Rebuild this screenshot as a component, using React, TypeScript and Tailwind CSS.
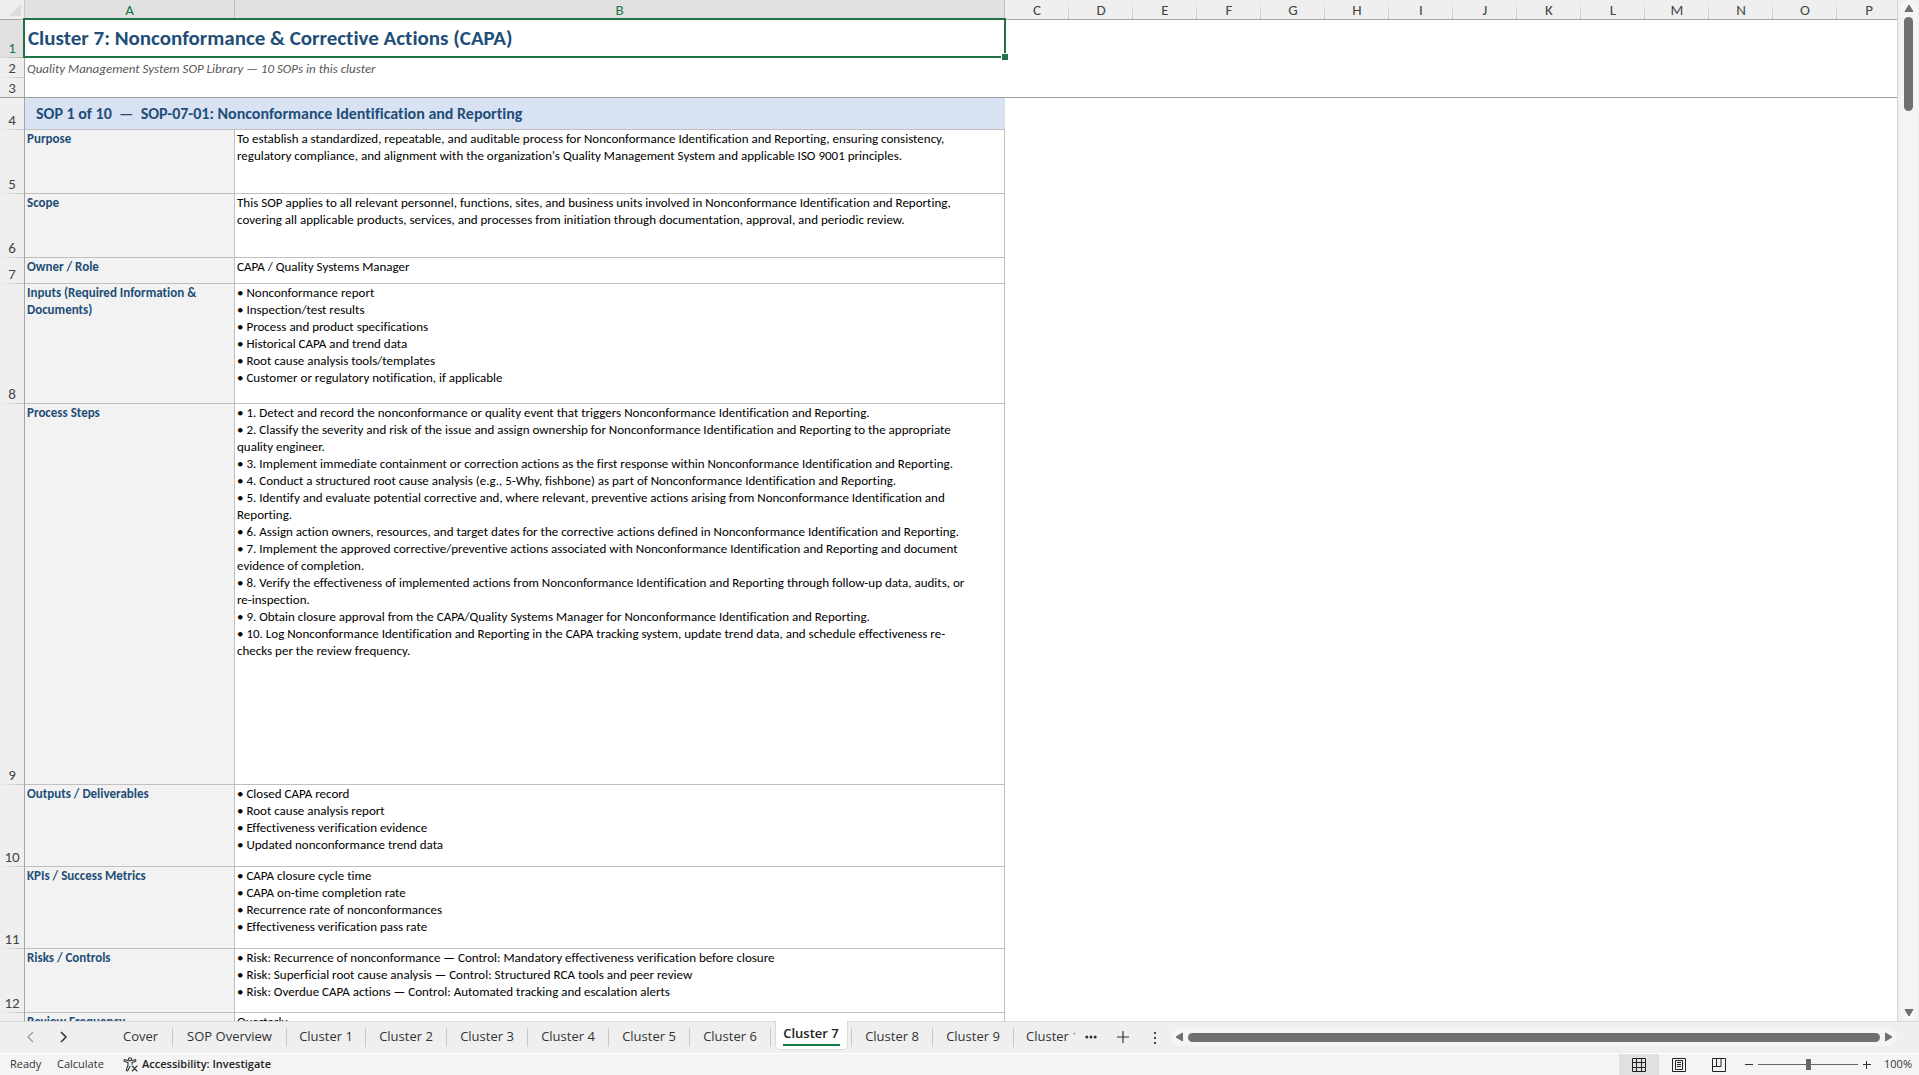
import { useState, type ReactNode } from "react";

const EXTRA_COLUMNS = ["C", "D", "E", "F", "G", "H", "I", "J", "K", "L", "M", "N", "O", "P"];

type Row = { n: number; height: string; label: string[]; lines: string[] };

const ROWS: Row[] = [
  {
    n: 5,
    height: "h-16",
    label: ["Purpose"],
    lines: [
      "To establish a standardized, repeatable, and auditable process for Nonconformance Identification and Reporting, ensuring consistency,",
      "regulatory compliance, and alignment with the organization's Quality Management System and applicable ISO 9001 principles.",
    ],
  },
  {
    n: 6,
    height: "h-16",
    label: ["Scope"],
    lines: [
      "This SOP applies to all relevant personnel, functions, sites, and business units involved in Nonconformance Identification and Reporting,",
      "covering all applicable products, services, and processes from initiation through documentation, approval, and periodic review.",
    ],
  },
  { n: 7, height: "h-[26px]", label: ["Owner / Role"], lines: ["CAPA / Quality Systems Manager"] },
  {
    n: 8,
    height: "h-[120px]",
    label: ["Inputs (Required Information &", "Documents)"],
    lines: [
      "• Nonconformance report",
      "• Inspection/test results",
      "• Process and product specifications",
      "• Historical CAPA and trend data",
      "• Root cause analysis tools/templates",
      "• Customer or regulatory notification, if applicable",
    ],
  },
  {
    n: 9,
    height: "h-[381px]",
    label: ["Process Steps"],
    lines: [
      "• 1. Detect and record the nonconformance or quality event that triggers Nonconformance Identification and Reporting.",
      "• 2. Classify the severity and risk of the issue and assign ownership for Nonconformance Identification and Reporting to the appropriate",
      "quality engineer.",
      "• 3. Implement immediate containment or correction actions as the first response within Nonconformance Identification and Reporting.",
      "• 4. Conduct a structured root cause analysis (e.g., 5-Why, fishbone) as part of Nonconformance Identification and Reporting.",
      "• 5. Identify and evaluate potential corrective and, where relevant, preventive actions arising from Nonconformance Identification and",
      "Reporting.",
      "• 6. Assign action owners, resources, and target dates for the corrective actions defined in Nonconformance Identification and Reporting.",
      "• 7. Implement the approved corrective/preventive actions associated with Nonconformance Identification and Reporting and document",
      "evidence of completion.",
      "• 8. Verify the effectiveness of implemented actions from Nonconformance Identification and Reporting through follow-up data, audits, or",
      "re-inspection.",
      "• 9. Obtain closure approval from the CAPA/Quality Systems Manager for Nonconformance Identification and Reporting.",
      "• 10. Log Nonconformance Identification and Reporting in the CAPA tracking system, update trend data, and schedule effectiveness re-",
      "checks per the review frequency.",
    ],
  },
  {
    n: 10,
    height: "h-[82px]",
    label: ["Outputs / Deliverables"],
    lines: [
      "• Closed CAPA record",
      "• Root cause analysis report",
      "• Effectiveness verification evidence",
      "• Updated nonconformance trend data",
    ],
  },
  {
    n: 11,
    height: "h-[82px]",
    label: ["KPIs / Success Metrics"],
    lines: [
      "• CAPA closure cycle time",
      "• CAPA on-time completion rate",
      "• Recurrence rate of nonconformances",
      "• Effectiveness verification pass rate",
    ],
  },
  {
    n: 12,
    height: "h-16",
    label: ["Risks / Controls"],
    lines: [
      "• Risk: Recurrence of nonconformance — Control: Mandatory effectiveness verification before closure",
      "• Risk: Superficial root cause analysis — Control: Structured RCA tools and peer review",
      "• Risk: Overdue CAPA actions — Control: Automated tracking and escalation alerts",
    ],
  },
  { n: 13, height: "h-[26px]", label: ["Review Frequency"], lines: ["Quarterly"] },
];

const TABS = [
  { name: "Cover", width: "w-16" },
  { name: "SOP Overview", width: "w-[114px]" },
  { name: "Cluster 1", width: "w-[79px]" },
  { name: "Cluster 2", width: "w-[81px]" },
  { name: "Cluster 3", width: "w-[81px]" },
  { name: "Cluster 4", width: "w-[81px]" },
  { name: "Cluster 5", width: "w-[81px]" },
  { name: "Cluster 6", width: "w-[81px]" },
  { name: "Cluster 7", width: "w-[81px]" },
  { name: "Cluster 8", width: "w-[81px]" },
  { name: "Cluster 9", width: "w-[81px]" },
];

function RowHeader({ n, active = false, frozen = false }: { n: number; active?: boolean; frozen?: boolean }) {
  const tone = active
    ? "bg-[#e1e1e1] text-[#217346] from-[#e1e1e1] to-[#b0b0b0]"
    : "bg-[#efefef] text-[#444444] from-[#efefef] to-[#c4c4c4]";
  const line = frozen
    ? "border-b border-b-[#9b9b9b]"
    : "bg-linear-to-r bg-[length:100%_1px] bg-bottom bg-no-repeat pb-px";
  return (
    <th
      scope="row"
      className={`border-r border-r-[#a6a6a6] px-0 pt-0 text-center align-bottom text-[15px] leading-[18px] font-normal ${tone} ${line}`}
    >
      {n}
    </th>
  );
}

function ColumnHeader({ children, active = false }: { children: ReactNode; active?: boolean }) {
  const tone = active
    ? "bg-[#e1e1e1] text-[#217346] border-r border-r-[#bdbdbd]"
    : "bg-[#efefef] text-[#444444] from-[#efefef] to-[#c8c8c8] bg-linear-to-b bg-[length:1px_100%] bg-right bg-no-repeat";
  return (
    <th
      scope="col"
      className={`border-b border-b-[#a6a6a6] p-0 text-center align-middle text-[15px] leading-[18px] font-normal last:bg-none last:pl-1 ${tone}`}
    >
      {children}
    </th>
  );
}

function Sheet() {
  return (
    <table className="w-full table-fixed border-separate border-spacing-0 font-['Calibri','Carlito','Lato',sans-serif] [font-variant-ligatures:none]">
      <colgroup>
        <col className="w-[25px]" />
        <col className="w-[210px]" />
        <col className="w-[770px]" />
        {EXTRA_COLUMNS.map((c) => (
          <col key={c} className={c === "P" ? "" : "w-16"} />
        ))}
      </colgroup>
      <thead>
        <tr className="h-5">
          <td className="border-r border-b border-r-[#c8c8c8] border-b-[#a6a6a6] bg-[#efefef] p-0">
            <button aria-label="Select all" className="flex h-[19px] w-full items-end justify-end pr-[3px] pb-[3px]">
              <svg width="12" height="12" viewBox="0 0 12 12" fill="#dcdcdc">
                <path d="M12 0v12H0z" />
              </svg>
            </button>
          </td>
          <ColumnHeader active>A</ColumnHeader>
          <ColumnHeader active>B</ColumnHeader>
          {EXTRA_COLUMNS.map((c) => (
            <ColumnHeader key={c}>{c}</ColumnHeader>
          ))}
        </tr>
      </thead>
      <tbody>
        <tr className="h-[38px]">
          <RowHeader n={1} active />
          <td colSpan={2} className="relative p-0 pb-0.5 pl-[3px] align-middle">
            <h1 className="text-[21px] leading-7 font-bold whitespace-nowrap text-[#1f4e78]">
              Cluster 7: Nonconformance &amp; Corrective Actions (CAPA)
            </h1>
            <div className="pointer-events-none absolute -top-0.5 -right-px bottom-0 -left-0.5 border-2 border-[#217346]" />
            <div className="pointer-events-none absolute -right-[3px] -bottom-0.5 size-[7px] border-t border-l border-white bg-[#217346]" />
          </td>
          <td colSpan={14} />
        </tr>
        <tr className="h-5">
          <RowHeader n={2} />
          <td colSpan={2} className="p-0 pl-0.5 align-middle text-[13px] leading-[17px] whitespace-nowrap text-[#595959] italic">
            Quality Management System SOP Library — 10 SOPs in this cluster
          </td>
          <td colSpan={14} />
        </tr>
        <tr className="h-5">
          <RowHeader n={3} frozen />
          <td colSpan={16} className="border-b border-[#9b9b9b] p-0" />
        </tr>
        <tr className="h-8">
          <RowHeader n={4} />
          <td colSpan={2} className="border-b border-[#bfbfbf] bg-[#d9e2f3] p-0 pl-[11px] align-middle">
            <h2 className="text-base leading-5 font-bold whitespace-pre text-[#1f4e78]">
              {"SOP 1 of 10  —  SOP-07-01: Nonconformance Identification and Reporting"}
            </h2>
          </td>
          <td colSpan={14} />
        </tr>
        {ROWS.map((row) => (
          <tr key={row.n} className={row.height}>
            <RowHeader n={row.n} />
            <td className="border-r border-b border-[#bfbfbf] bg-[#f2f2f2] p-0 pl-0.5 align-top text-[13px] leading-[17px] font-bold whitespace-nowrap text-[#1f4e78]">
              {row.label.map((l) => (
                <div key={l}>{l}</div>
              ))}
            </td>
            <td className="border-r border-b border-[#bfbfbf] p-0 pl-0.5 align-top text-[13px] leading-[17px] whitespace-nowrap text-black">
              {row.lines.map((l) => (
                <div key={l}>{l}</div>
              ))}
            </td>
            <td colSpan={14} />
          </tr>
        ))}
      </tbody>
    </table>
  );
}

function Triangle({ d, label }: { d: string; label: string }) {
  return (
    <button aria-label={label} className="flex shrink-0 items-center justify-center">
      <svg width="10" height="10" viewBox="0 0 10 10" fill="#707070" stroke="#707070" strokeWidth="1" strokeLinejoin="round">
        <path d={d} />
      </svg>
    </button>
  );
}

function VerticalScroll() {
  return (
    <div className="flex w-[22px] shrink-0 justify-center border-l border-[#d6d6d6] bg-[#efefef]">
      <div className="flex w-[18px] flex-col items-center rounded-full bg-[#f5f5f5] py-[3px]">
        <Triangle label="Scroll up" d="M5 2 9 8.5H1z" />
        <div className="mt-1 h-[94px] w-[9px] rounded-full bg-[#707070]" />
        <div className="flex-1" />
        <Triangle label="Scroll down" d="M5 8 1 1.5h8z" />
      </div>
    </div>
  );
}

function TabBar() {
  const [active, setActive] = useState("Cluster 7");
  return (
    <div className="flex h-8 shrink-0 bg-[#efefef] font-['Segoe_UI','Open_Sans',sans-serif] text-[13px] text-[#333333]">
      <nav aria-label="Sheets" className="flex min-w-0 border-t border-[#d9d9d9]">
        <div className="flex w-[109px] shrink-0 items-center gap-[22px] pb-px pl-[25px]">
          <button aria-label="Previous sheet">
            <svg width="11" height="12" viewBox="0 0 11 12" fill="none" stroke="#9a9a9a" strokeWidth="1.3">
              <path d="M8 1 3 6l5 5" />
            </svg>
          </button>
          <button aria-label="Next sheet">
            <svg width="11" height="12" viewBox="0 0 11 12" fill="none" stroke="#333" strokeWidth="1.5">
              <path d="m3 1 5 5-5 5" />
            </svg>
          </button>
        </div>
        {TABS.map((t) =>
          t.name === active ? (
            <div key={t.name} className={`${t.width} flex shrink-0 justify-center border-r border-[#c8c8c8] my-[6px]`}>
              <button className="-mt-[7px] h-[29px] w-[73px] rounded-b-[5px] border border-t-0 border-[#dadada] bg-white px-[7px] pb-0.5">
                <span className="block border-b-2 border-[#107c41] leading-[22px] font-semibold whitespace-nowrap text-[#222222]">
                  {t.name}
                </span>
              </button>
            </div>
          ) : (
            <button
              key={t.name}
              onClick={() => setActive(t.name)}
              className={`${t.width} my-[6px] shrink-0 border-r border-[#c8c8c8] pb-0.5 leading-[17px] whitespace-nowrap`}
            >
              {t.name}
            </button>
          ),
        )}
        <button className="my-[6px] ml-3 w-[49px] shrink-0 overflow-hidden pb-0.5 text-left leading-[17px] whitespace-nowrap">
          Cluster 10
        </button>
      </nav>
      <div className="flex min-w-0 flex-1 items-center border-t border-[#d9d9d9] pb-px">
        <button aria-label="More sheets" className="ml-[10px]">
          <svg width="12" height="4" viewBox="0 0 12 4" fill="#333">
            <circle cx="1.8" cy="2" r="1.5" />
            <circle cx="6" cy="2" r="1.5" />
            <circle cx="10.2" cy="2" r="1.5" />
          </svg>
        </button>
        <button aria-label="New sheet" className="ml-5">
          <svg width="12" height="12" viewBox="0 0 12 12" stroke="#333" strokeWidth="1.2">
            <path d="M6 0v12M0 6h12" />
          </svg>
        </button>
        <button aria-label="Resize tab bar" className="ml-6">
          <svg width="4" height="14" viewBox="0 0 4 14" fill="#444">
            <path d="M1 2h2v2H1zM1 7h2v2H1zM1 12h2v2H1z" />
          </svg>
        </button>
        <div className="mr-[22px] ml-[14px] flex h-[18px] flex-1 items-center gap-1 rounded-full bg-[#f5f5f5] px-[3px]">
          <Triangle label="Scroll left" d="M2 5 8.500 1v8z" />
          <div className="h-[9px] flex-1 rounded-full bg-[#707070]" />
          <Triangle label="Scroll right" d="M8 5 1.500 1v8z" />
        </div>
      </div>
    </div>
  );
}

function StatusBar() {
  const [zoom, setZoom] = useState(100);
  return (
    <footer className="flex h-[22px] shrink-0 items-center border-t border-white bg-[#f4f4f4] font-['Segoe_UI','Open_Sans',sans-serif] text-[11px] text-[#333333]">
      <span className="w-[47px] pl-[10px]">Ready</span>
      <button className="w-[67px] pl-[10px] text-left">Calculate</button>
      <button className="flex items-center gap-1 pl-[9px] font-semibold text-[#222222]">
        <svg width="15" height="15" viewBox="0 0 15 15" fill="none" stroke="#333" strokeWidth="1.1" strokeLinecap="round" strokeLinejoin="round">
          <circle cx="7" cy="2.3" r="1.6" />
          <path d="M5 3.6 2.2 2.7C1 2.4.6 4 1.7 4.4L5 5.6v2.6L3.4 12.600c-.4 1.200 1.100 1.800 1.600.7L7 9.200" />
          <path d="m9 3.600 2.800-.9c1.200-.3 1.600 1.300.5 1.700L9 5.600v1.600M9.200 9l4.800 5M14 9l-4.800 5" />
        </svg>
        <span>Accessibility: Investigate</span>
      </button>
      <div className="ml-auto flex h-full items-center">
        <button aria-label="Normal view" className="flex h-full w-10 items-center justify-center bg-[#e0e0e0]">
          <svg width="14" height="14" viewBox="0 0 14 14" fill="none" stroke="#222" strokeWidth="1">
            <path d="M.5.5h13v13H.5zM.5 4.500h13M.5 9.500h13M4.500.5v13M9.500.5v13" />
          </svg>
        </button>
        <button aria-label="Page layout view" className="flex h-full w-10 items-center justify-center">
          <svg width="14" height="14" viewBox="0 0 14 14" fill="none" stroke="#222" strokeWidth="1">
            <path d="M.5.5h13v13H.5zM3.500 2.500h7v9h-7zM5 4.500h4M5 6.500h4M5 8.500h4" />
          </svg>
        </button>
        <button aria-label="Page break preview" className="flex h-full w-10 items-center justify-center">
          <svg width="14" height="14" viewBox="0 0 14 14" fill="none" stroke="#222" strokeWidth="1">
            <path d="M.5.5h13v13H.5zM.5 8.500h8.500V.5M4.500.5v8" />
          </svg>
        </button>
        <button aria-label="Zoom out" onClick={() => setZoom(Math.max(10, zoom - 10))} className="ml-[6px]">
          <svg width="8" height="8" viewBox="0 0 8 8" stroke="#333">
            <path d="M0 3.500h8" />
          </svg>
        </button>
        <input
          type="range"
          aria-label="Zoom"
          min={10}
          max={190}
          value={zoom}
          onChange={(e) => setZoom(Number(e.target.value))}
          className="mx-[5px] h-3 w-[100px] appearance-none bg-linear-to-r from-[#666666] to-[#666666] bg-[length:100%_1px] bg-center bg-no-repeat [&::-webkit-slider-thumb]:h-[11px] [&::-webkit-slider-thumb]:w-[5px] [&::-webkit-slider-thumb]:appearance-none [&::-webkit-slider-thumb]:bg-[#666666]"
        />
        <button aria-label="Zoom in" onClick={() => setZoom(Math.min(190, zoom + 10))}>
          <svg width="8" height="8" viewBox="0 0 8 8" stroke="#333">
            <path d="M0 3.500h8M3.500 0v8" />
          </svg>
        </button>
        <span className="w-12 pr-[7px] text-right">{zoom}%</span>
      </div>
    </footer>
  );
}

export default function App() {
  return (
    <div className="flex h-screen flex-col overflow-hidden bg-white">
      <main className="flex min-h-0 flex-1">
        <div className="min-w-0 flex-1 overflow-hidden">
          <Sheet />
        </div>
        <VerticalScroll />
      </main>
      <TabBar />
      <StatusBar />
    </div>
  );
}
